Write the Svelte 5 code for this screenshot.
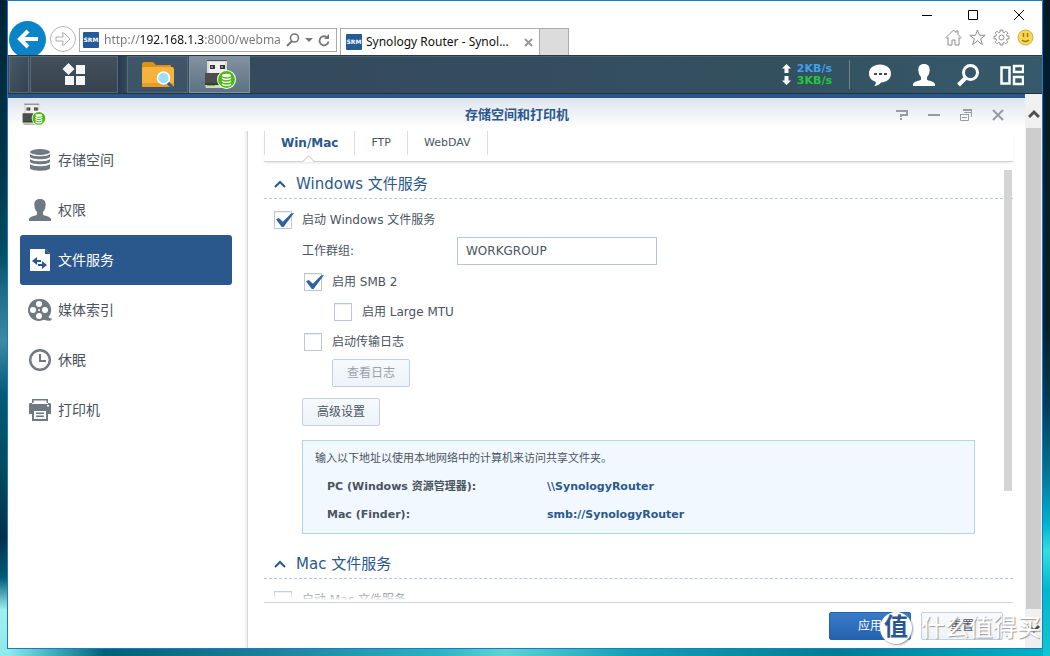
<script>
  let url = $state('http://192.168.1.3:8000/webma');
  let workgroup = $state('WORKGROUP');
  let windowsService = $state(true);
  let smb2 = $state(true);
  let largeMtu = $state(false);
  let transferLog = $state(false);
  let macService = $state(false);
  let activeTab = $state('Win/Mac');
  let activeItem = $state('files');

  const tabs = ['Win/Mac', 'FTP', 'WebDAV'];

  const items = [
    { id: 'storage', label: '存储空间' },
    { id: 'user', label: '权限' },
    { id: 'files', label: '文件服务' },
    { id: 'media', label: '媒体索引' },
    { id: 'sleep', label: '休眠' },
    { id: 'printer', label: '打印机' },
  ];
</script>

{#snippet person()}
  <path d="M12 1c-4 0-6 2.400-5.600 6.400.2 3 1 5 2.600 6.600v2.600c-.6 1.400-8 1.600-8 5v1.400h22v-1.400c0-3.400-7.400-3.600-8-5V14c1.600-1.600 2.400-3.600 2.600-6.600C18 3.400 16 1 12 1z" />
{/snippet}

{#snippet usb()}
  <svg class="usb" viewBox="0 0 34 32" aria-hidden="true">
    <path d="M4 1h20v14H4z" fill="#d9d9d9" />
    <path d="M4 1h20v1H4z" fill="#555" />
    <path d="M6 3h16v12H6z" fill="#efefef" />
    <path d="M7 6h5v4H7zM17 6h5v4h-5z" fill="#333" />
    <path d="M8 7h2v2H8zM18 7h2v2h-2z" fill="#888" />
    <path d="M2 14h24v15H4l-2-3z" fill="#3b3b3b" />
    <path d="M2 14h13v10H2z" fill="#4d4d4d" />
    <path d="M2 26h18v3H3z" fill="#d2d2d2" />
    <path d="M4 26h8v1H4z" fill="#5cc818" />
    <circle cx="23.500" cy="20.500" r="9.500" fill="#fff" />
    <circle cx="23.500" cy="20.500" r="8.500" fill="#4cba10" />
    <ellipse cx="23.500" cy="16.500" rx="4.500" ry="1.800" fill="#fff" />
    <path d="M19 19c2 2 7 2 9 0M19 22c2 2 7 2 9 0M19 25c2 2 7 2 9 0" fill="none" stroke="#fff" stroke-width="1.500" />
  </svg>
{/snippet}

<div class="desktop">
  <div class="browser">
    <header class="chrome">
      <nav class="nav">
        <button class="back" aria-label="后退">
          <svg viewBox="0 0 22 20" width="22" height="20"><path d="M21 10H3M11 2l-8 8 8 8" fill="none" stroke="#fff" stroke-width="4" /></svg>
        </button>
        <button class="forward" aria-label="前进">
          <svg viewBox="0 0 16 14" width="16" height="14"><path d="M1 5h7V3L7 1h2l6 6-6 6H7l1-2V9H1z" fill="none" stroke="#aaa" /></svg>
        </button>
      </nav>
      <div class="address">
        <span class="favicon">SRM</span>
        <input type="text" aria-label="地址" bind:value={url} />
        <button aria-label="搜索">
          <svg viewBox="0 0 14 14" width="14" height="14"><circle cx="8.500" cy="5" r="4" fill="none" stroke="#777" stroke-width="1.600" /><path d="M6 8l-5 5" stroke="#777" stroke-width="2" /></svg>
        </button>
        <button aria-label="地址列表">
          <svg viewBox="0 0 8 5" width="8" height="5"><path d="M0 0h8L4 4z" fill="#777" /></svg>
        </button>
        <button aria-label="刷新">
          <svg viewBox="0 0 12 13" width="12" height="13"><path d="M10.500 7.500a4.500 4.500 0 1 1-2-4.500" fill="none" stroke="#777" stroke-width="1.800" /><path d="M6 5h5V0z" fill="#777" /></svg>
        </button>
      </div>
      <div class="page-tab">
        <span class="favicon">SRM</span>
        <span class="page-name">Synology Router - Synol...</span>
        <button aria-label="关闭标签">
          <svg viewBox="0 0 9 9" width="9" height="9"><path d="M1 1l7 7M8 1L1 8" stroke="#999" stroke-width="2" /></svg>
        </button>
      </div>
      <button class="new-tab" aria-label="新标签"></button>
      <div class="chrome-right">
        <div class="win-controls">
          <button aria-label="最小化"><svg viewBox="0 0 12 12"><path d="M1 6.500h10" /></svg></button>
          <button aria-label="最大化"><svg viewBox="0 0 12 12"><path d="M1.500 1.500h9v9h-9z" /></svg></button>
          <button aria-label="关闭"><svg viewBox="0 0 12 12"><path d="M1 1l10 10M11 1L1 11" /></svg></button>
        </div>
        <div class="tools">
          <button aria-label="主页">
            <svg viewBox="0 0 17 17"><path d="M1 8.500L8.500 1l2.500 2.500V2h2v3.500l3 3-1 1-1-1V16h-4v-5H7v5H3V8.500l-1 1z" /></svg>
          </button>
          <button aria-label="收藏">
            <svg viewBox="0 0 17 17"><path d="M8.500 1l2 5.300h5.700l-4.600 3.500 1.800 5.700-4.900-3.500-4.900 3.500 1.800-5.700L.8 6.300h5.700z" /></svg>
          </button>
          <button aria-label="工具">
            <svg viewBox="0 0 17 17">
              <path d="M7.100 1h2.800v2l1.500.7 1.500-1.500 2 2-1.500 1.500.6 1.400h2v2.800h-2l-.6 1.400 1.500 1.500-2 2-1.500-1.500-1.500.7v2H7.100v-2l-1.500-.7-1.500 1.500-2-2 1.500-1.500L3 9.900H1V7.100h2l.6-1.400L2.100 4.200l2-2 1.500 1.500L7.100 3z" />
              <circle cx="8.500" cy="8.500" r="2.500" />
            </svg>
          </button>
          <button aria-label="反馈">
            <svg viewBox="0 0 17 17"><circle cx="8.500" cy="8.500" r="7.500" fill="#fbd84a" stroke="#c9a95a" /><path d="M6.500 4v4M10.500 4v4M5 11q3.500 3 7 0" stroke="#96702c" stroke-width="1.500" /></svg>
          </button>
        </div>
      </div>
    </header>

    <div class="taskbar">
      <div class="slot edge"></div>
      <button class="slot menu" aria-label="主菜单">
        <svg viewBox="0 0 24 24" width="24" height="24" fill="#f2f4f6"><path d="M6.500 0l6 6-6 6-6-6zM14 2h9v9h-9zM3 13h9v9H3zM14 13h9v9h-9z" /></svg>
      </button>
      <div class="gap"></div>
      <button class="slot app" aria-label="文件管理">
        <svg viewBox="0 0 34 28" width="34" height="28">
          <path d="M1 3q0-2 2-2h9l3 3h15v5H1z" fill="#d9921b" />
          <path d="M1 8q0-2 2-2h28q2 0 2 2v17q0 1-2 1H3q-2 0-2-1z" fill="#f6b23c" />
          <path d="M1 22h32v3q0 1-2 1H3q-2 0-2-1z" fill="#e69e28" />
          <path d="M26 21l6 6" stroke="#2d5f8f" stroke-width="3" />
          <circle cx="22.500" cy="17" r="6" fill="#9be0fb" stroke="#fff" stroke-width="1.500" />
        </svg>
      </button>
      <button class="slot app current" aria-label="存储空间和打印机">{@render usb()}</button>
      <div class="speed">
        <span class="up"><svg viewBox="0 0 9 9" width="9" height="9"><path d="M4.500 0L9 4.500H6.500V9h-4V4.500H0z" /></svg>2KB/s</span>
        <span class="down"><svg viewBox="0 0 9 9" width="9" height="9"><path d="M4.500 9L9 4.500H6.500V0h-4v4.500H0z" /></svg>3KB/s</span>
      </div>
      <div class="tray">
        <button aria-label="通知">
          <svg viewBox="0 0 24 24"><path d="M12 1.500c6.500 0 11 3.700 11 9s-4.500 9-10 9c-1.500 2-4 3.500-7 3.500 1.500-1 2-2.500 1.700-4C3.500 17.500 1 14.500 1 10.500c0-5.300 4.500-9 11-9z" /><path d="M6 10h3v2H6zM11 10h3v2h-3zM16 10h3v2h-3z" fill="#34505f" /></svg>
        </button>
        <button aria-label="用户"><svg viewBox="0 0 24 24">{@render person()}</svg></button>
        <button aria-label="搜索">
          <svg viewBox="0 0 24 24"><circle cx="14.500" cy="9.500" r="7" fill="none" stroke="#fff" stroke-width="3" /><path d="M9.500 15l-7 7" stroke="#fff" stroke-width="4" /></svg>
        </button>
        <button aria-label="小工具">
          <svg viewBox="0 0 24 24"><path d="M1.500 4.500h8v16h-8zM14 3h9v6h-9zM14 14h9v7h-9z" fill="none" stroke="#fff" stroke-width="2.500" /></svg>
        </button>
      </div>
    </div>

    <div class="page">
      <div class="panel">
        <div class="titlebar">
          <div class="title-icon">{@render usb()}</div>
          <h1>存储空间和打印机</h1>
          <div class="panel-controls">
            <button aria-label="帮助"><svg viewBox="0 0 12 12"><path d="M0 2h11v4H5v2M5 9v2" /></svg></button>
            <button aria-label="最小化"><svg viewBox="0 0 12 12"><path d="M0 6h12" /></svg></button>
            <button aria-label="还原"><svg viewBox="0 0 12 12"><path d="M3 1h9" /><path d="M4 3.500h7.500V8M11.500 2v3M0 5.500h9M.5 5v6.500h8V5M2 8.500h5" stroke-width="1" /></svg></button>
            <button aria-label="关闭"><svg viewBox="0 0 12 12"><path d="M1 1l10 10M11 1L1 11" /></svg></button>
          </div>
        </div>

        <div class="main">
          <nav class="sidebar">
            {#each items as item}
              <button class="item" class:active={item.id === activeItem} onclick={() => (activeItem = item.id)}>
                <svg viewBox="0 0 24 24" width="24" height="24">
                  {#if item.id === 'storage'}
                    <ellipse cx="12" cy="4" rx="10" ry="3" />
                    <path d="M2 5.500c2 3 18 3 20 0v3.500c-2 3-18 3-20 0zM2 10.500c2 3 18 3 20 0V14c-2 3-18 3-20 0zM2 15.500c2 3 18 3 20 0v5c-2 3-18 3-20 0z" />
                    <path d="M2 5.500c2 3 18 3 20 0M2 10.500c2 3 18 3 20 0M2 15.500c2 3 18 3 20 0" fill="none" stroke="#fff" />
                  {:else if item.id === 'user'}
                    {@render person()}
                  {:else if item.id === 'files'}
                    <path d="M2 1h15l5 5v17H2z" />
                    <path class="cut" d="M17 1v5h5zM4 13l5-4v3h4v2H9v3zM19 17l-5 4v-3h-4v-2h4v-3z" />
                  {:else if item.id === 'media'}
                    <path fill-rule="evenodd" d="M11 1a11 11 0 1 0 5 20.800q3 1.200 7 .7l1-2q-2.500 0-3.500-1.500A11 11 0 0 0 11 1zM11 3a3 3 0 1 1 0 6 3 3 0 0 1 0-6zM5 9a3 3 0 1 1 0 6 3 3 0 0 1 0-6zM17 9a3 3 0 1 1 0 6 3 3 0 0 1 0-6zM11 15a3 3 0 1 1 0 6 3 3 0 0 1 0-6zM11 11a1 1 0 1 1 0 2 1 1 0 0 1 0-2z" />
                  {:else if item.id === 'sleep'}
                    <circle cx="12" cy="12" r="9.800" fill="none" stroke="#6f7982" stroke-width="2.400" />
                    <path d="M12 6v7h6" fill="none" stroke="#6f7982" stroke-width="2" />
                  {:else}
                    <path fill-rule="evenodd" d="M4 1h16v5H4zM5.500 2.500v2.500h13V2.500zM1 6q0-1 2-1h18q2 0 2 1v10h-3v7H4v-7H1zM6 13v8h12v-8zM19 7v1.500h2V7z" />
                    <path d="M8 14.500h8V16H8zM8 17.500h8V19H8z" />
                  {/if}
                </svg>
                {item.label}
              </button>
            {/each}
          </nav>

          <div class="content">
            <div class="tabs" role="tablist">
              {#each tabs as tab}
                <button class="tab" role="tab" aria-selected={tab === activeTab} class:active={tab === activeTab} onclick={() => (activeTab = tab)}>
                  {tab}
                </button>
              {/each}
            </div>

            <div class="scroll">
              <section>
                <h2>
                  <svg viewBox="0 0 12 8" width="12" height="8"><path d="M1 7l5-5 5 5" /></svg>
                  Windows 文件服务
                </h2>
                <div class="fields">
                  <label class="row"><input type="checkbox" bind:checked={windowsService} />启动 Windows 文件服务</label>
                  <div class="row text-row">
                    <label for="workgroup">工作群组:</label>
                    <input id="workgroup" type="text" bind:value={workgroup} />
                  </div>
                  <label class="row level-2"><input type="checkbox" bind:checked={smb2} />启用 SMB 2</label>
                  <label class="row level-3"><input type="checkbox" bind:checked={largeMtu} />启用 Large MTU</label>
                  <label class="row level-2"><input type="checkbox" bind:checked={transferLog} />启动传输日志</label>
                  <div class="actions log"><button class="btn" disabled={!transferLog}>查看日志</button></div>
                  <div class="actions"><button class="btn">高级设置</button></div>
                  <div class="info">
                    <p>输入以下地址以使用本地网络中的计算机来访问共享文件夹。</p>
                    <dl>
                      <dt>PC (Windows 资源管理器):</dt>
                      <dd>\\SynologyRouter</dd>
                      <dt>Mac (Finder):</dt>
                      <dd>smb://SynologyRouter</dd>
                    </dl>
                  </div>
                </div>
              </section>

              <section>
                <h2>
                  <svg viewBox="0 0 12 8" width="12" height="8"><path d="M1 7l5-5 5 5" /></svg>
                  Mac 文件服务
                </h2>
                <div class="fields">
                  <label class="row"><input type="checkbox" bind:checked={macService} />启动 Mac 文件服务</label>
                </div>
              </section>
              <div class="thumb"></div>
            </div>

            <footer>
              <button class="btn primary">应用</button>
              <button class="btn">重置</button>
            </footer>
          </div>
        </div>
      </div>

      <div class="scrollbar">
        <svg viewBox="0 0 12 10" width="12" height="10"><path d="M1 8l5-5 5 5" /></svg>
        <div class="scrollbar-thumb"></div>
        <svg class="arrow-down" viewBox="0 0 12 10" width="12" height="10"><path d="M1 2l5 5 5-5" /></svg>
      </div>
    </div>
  </div>

  <div class="watermark"><span class="seal">值</span>什么值得买</div>
</div>

<style>
  :global(body) {
    margin: 0;
  }

  .desktop {
    position: relative;
    box-sizing: border-box;
    height: 100vh;
    padding: 0 7px 7px;
    overflow: hidden;
    font: 12px/18px "DejaVu Sans", "Noto Sans CJK SC", sans-serif;
    color: #4a545e;
    background:
      linear-gradient(#002436 0%, #003548 25%, #004c60 38%, #1c6a84 44%, #3c8aa4 52%, #055a74 60%, #004a5e 72%, #00304a 82%, #005a74 88%, #9ff0f0 93%, #8fe8ea 100%) left / 7px 100% no-repeat,
      linear-gradient(#001a28 0%, #00222f 50%, #003e5c 62%, #007494 72%, #00b6cf 80%, #30dfdf 84%, #00b8cc 90%, #10c8d0 100%) right / 7px 100% no-repeat,
      linear-gradient(90deg, #a0f4f4 0%, #3fb0bc 5%, #006078 10%, #1a7f98 25%, #2cb4c2 42%, #5fd4d6 48%, #12a0b4 60%, #007c94 80%, #00b4c8 100%);
  }

  button {
    display: flex;
    align-items: center;
    justify-content: center;
    margin: 0;
    padding: 0;
    border: 0;
    background: none;
    font: inherit;
    color: inherit;
  }

  .browser {
    display: flex;
    flex-direction: column;
    box-sizing: border-box;
    height: 100%;
    border: 1px solid #1979ca;
    background: #fff;
  }

  /* browser chrome */
  .chrome {
    display: flex;
    align-items: flex-end;
    height: 54px;
    flex: none;
    overflow: hidden;
    font-family: "Noto Sans", "Noto Sans CJK SC", sans-serif;
    font-size: 12px;
  }

  .nav {
    display: flex;
    align-items: center;
    gap: 4px;
    height: 32px;
    padding-left: 1px;
    margin-right: 3px;
  }

  .back {
    width: 37px;
    height: 37px;
    border-radius: 50%;
    background: #0a84c6;
  }

  .forward {
    box-sizing: border-box;
    width: 26px;
    height: 26px;
    border: 1px solid #b5b5b5;
    border-radius: 50%;
  }

  .address {
    display: flex;
    align-items: center;
    gap: 5px;
    box-sizing: border-box;
    width: 258px;
    height: 24px;
    margin: 0 3px 3px 0;
    padding: 0 6px 0 3px;
    border: 1px solid #ababab;
  }

  .address input {
    flex: 1;
    min-width: 0;
    padding: 0;
    border: 0;
    outline: 0;
    font: inherit;
    color: transparent;
    background: linear-gradient(90deg, #777 36px, #111 36px, #111 101px, #777 101px);
    background-clip: text;
  }

  .favicon {
    flex: none;
    width: 16px;
    height: 16px;
    border-radius: 1px;
    background: #245a96;
    color: #fff;
    font: bold 6px/16px "DejaVu Sans", sans-serif;
    text-align: center;
  }

  .page-tab {
    display: flex;
    align-items: center;
    gap: 4px;
    box-sizing: border-box;
    width: 200px;
    height: 27px;
    padding: 0 6px 0 5px;
    border: 1px solid #ababab;
    border-bottom: 0;
    color: #111;
  }

  .page-name {
    flex: 1;
    white-space: nowrap;
  }

  .new-tab {
    width: 29px;
    height: 27px;
    border: solid #ababab;
    border-width: 1px 1px 0 0;
    background: #dcdcdc;
  }

  .chrome-right {
    display: flex;
    flex-direction: column;
    align-items: flex-end;
    height: 54px;
    margin-left: auto;
  }

  .win-controls {
    display: flex;
    height: 28px;
  }

  .win-controls button {
    width: 46px;
  }

  .win-controls svg {
    width: 12px;
    height: 12px;
    fill: none;
    stroke: #000;
  }

  .tools {
    display: flex;
    gap: 7px;
    padding-right: 8px;
  }

  .tools svg {
    width: 17px;
    height: 17px;
    fill: none;
    stroke: #8d8d8d;
  }

  /* taskbar */
  .taskbar {
    display: flex;
    box-sizing: border-box;
    height: 39px;
    flex: none;
    padding-right: 8px;
    border-top: 1px solid #2a3946;
    border-bottom: 1px solid #24323f;
    background: linear-gradient(90deg, #35495b, #344c5e 40%, #33505f 75%, #365a6b);
    box-shadow: inset 0 1px #4b6072;
  }

  .slot {
    box-sizing: border-box;
    border: 1px solid #5b6a78;
    background: linear-gradient(#434f5b, #36424d);
  }

  .edge {
    width: 20px;
    margin: 0 1px;
    background: linear-gradient(120deg, #4a5966, #33414e);
  }

  .menu {
    width: 88px;
  }

  .gap {
    width: 9px;
    background: linear-gradient(90deg, #26384a, #36495a);
  }

  .app {
    width: 61px;
    margin-right: 1px;
    background: linear-gradient(#40566a, #3a5365);
  }

  .current {
    border-color: #8493a0;
    background: linear-gradient(#8291a0, #5b7382);
  }

  .usb {
    width: 34px;
    height: 32px;
  }

  .speed {
    display: flex;
    flex-direction: column;
    justify-content: center;
    margin-left: auto;
    padding-right: 17px;
    font-weight: bold;
    font-size: 11px;
    line-height: 12px;
  }

  .speed span {
    display: flex;
    align-items: center;
    gap: 6px;
  }

  .speed svg {
    fill: #fff;
  }

  .up {
    color: #3fa0ec;
  }

  .down {
    color: #24c83c;
  }

  .tray {
    display: flex;
    align-items: center;
    padding-left: 8px;
    border-left: 1px solid #74848f;
    margin: 4px 0;
  }

  .tray button {
    width: 44px;
  }

  .tray svg {
    width: 24px;
    height: 24px;
    fill: #fff;
  }

  /* page */
  .page {
    display: flex;
    flex: 1;
    min-height: 0;
  }

  .panel {
    display: flex;
    flex-direction: column;
    flex: 1;
    min-width: 0;
    border-top: 4px solid #2a568e;
    background: linear-gradient(#dfe5ee, #fff 30px);
  }

  .titlebar {
    display: grid;
    grid-template-columns: 1fr auto 1fr;
    align-items: center;
    height: 33px;
    padding: 0 11px 0 12px;
  }

  .title-icon {
    display: flex;
  }

  .title-icon .usb {
    width: 28px;
    height: 24px;
  }

  h1 {
    margin: 0;
    font-size: 13px;
    line-height: 18px;
    color: #2a588e;
  }

  .panel-controls {
    display: flex;
    justify-content: flex-end;
  }

  .panel-controls button {
    width: 32px;
  }

  .panel-controls svg {
    width: 12px;
    height: 12px;
    fill: none;
    stroke: #969ca4;
    stroke-width: 2;
  }

  .main {
    display: flex;
    flex: 1;
    min-height: 0;
  }

  .sidebar {
    box-sizing: border-box;
    width: 240px;
    flex: none;
    padding: 4px 15px 0 12px;
    border-right: 1px solid #d6d6d6;
    box-shadow: inset -3px 0 3px -2px #e6e6e6;
  }

  .item {
    justify-content: flex-start;
    gap: 6px;
    width: 100%;
    height: 50px;
    padding-left: 8px;
    border-radius: 3px;
    font-size: 14px;
    line-height: 20px;
  }

  .item svg {
    fill: #6f7982;
  }

  .item.active {
    background: #2a588d;
    color: #fff;
  }

  .item.active svg {
    fill: #fff;
  }

  .item.active .cut {
    fill: #2a588d;
  }

  .cut {
    fill: #fff;
  }

  .content {
    display: flex;
    flex-direction: column;
    flex: 1;
    min-width: 0;
    margin: 0 12px 0 16px;
  }

  .tabs {
    display: flex;
    height: 30px;
    flex: none;
    border-bottom: 1px solid #d0d0d0;
    box-shadow: 0 2px 3px -1px #e4e4e4;
  }

  .tab {
    position: relative;
    height: 24px;
    padding: 0 16px;
    border-right: 1px solid #d3deea;
    font-size: 11px;
  }

  .tab:first-child {
    border-left: 1px solid #d3deea;
  }

  .tab.active {
    font-weight: bold;
    font-size: 12px;
    color: #2a588e;
  }

  .tab.active::after {
    content: "";
    position: absolute;
    left: 50%;
    bottom: -11px;
    width: 8px;
    height: 8px;
    margin-left: -6px;
    border: solid #d0d0d0;
    border-width: 1px 0 0 1px;
    background: linear-gradient(135deg, #fff 50%, transparent 50%);
    transform: rotate(45deg);
  }

  .scroll {
    position: relative;
    flex: 1;
    min-height: 0;
    padding-top: 8px;
    overflow: hidden;
  }

  .scroll::after {
    content: "";
    position: absolute;
    inset: auto 0 0;
    height: 12px;
    background: linear-gradient(transparent, #fff 90%);
  }

  .thumb {
    position: absolute;
    top: 8px;
    right: 1px;
    width: 8px;
    height: 73%;
    background: #d3d4d6;
  }

  h2 {
    display: flex;
    align-items: center;
    gap: 10px;
    height: 28px;
    margin: 0;
    padding-left: 10px;
    border-bottom: 1px dashed #b8c6d6;
    font-weight: normal;
    font-size: 15px;
    color: #2a588e;
  }

  h2 svg {
    fill: none;
    stroke: #2a588e;
    stroke-width: 2;
  }

  section + section {
    margin-top: 16px;
  }

  .fields {
    padding: 6px 38px 0 10px;
  }

  .row {
    display: flex;
    align-items: center;
    gap: 10px;
    height: 30px;
  }

  .level-2 {
    padding-left: 30px;
  }

  .level-3 {
    padding-left: 60px;
  }

  input[type="checkbox"] {
    appearance: none;
    box-sizing: border-box;
    position: relative;
    width: 18px;
    height: 18px;
    margin: 0;
    border: 1px solid #bcc7d8;
    background: #fff;
    box-shadow: inset 0 1px 1px #eee;
  }

  input[type="checkbox"]:checked::after {
    content: "";
    position: absolute;
    left: 1px;
    top: 1px;
    width: 18px;
    height: 14px;
    background: #2d62a3;
    clip-path: polygon(0 45%, 16% 36%, 38% 62%, 84% 4%, 100% 0, 42% 100%, 32% 100%);
  }

  .text-row {
    height: 32px;
    padding-left: 28px;
    gap: 0;
  }

  .text-row label {
    width: 155px;
  }

  .text-row input {
    box-sizing: border-box;
    width: 200px;
    height: 28px;
    padding: 0 8px;
    border: 1px solid #b9c5d6;
    font: inherit;
    color: inherit;
  }

  .actions {
    padding-left: 28px;
  }

  .log {
    padding: 2px 0 11px 58px;
  }

  .btn {
    box-sizing: border-box;
    height: 28px;
    min-width: 78px;
    padding: 0 13px;
    border: 1px solid #c3d0e0;
    border-radius: 2px;
    background: linear-gradient(#f7fafe, #edf3f8);
  }

  .btn:disabled {
    color: #98a2ac;
  }

  .info {
    margin: 14px 0 0 28px;
    padding: 4px 12px;
    border: 1px solid #b1d6ee;
    background: #f1f8ff;
    font-size: 11px;
    line-height: 28px;
  }

  .info p {
    margin: 0;
  }

  dl {
    display: grid;
    grid-template-columns: 220px 1fr;
    margin: 0;
    padding-left: 12px;
    font-weight: bold;
  }

  dd {
    margin: 0;
    color: #2a588e;
  }

  footer {
    display: flex;
    justify-content: flex-end;
    gap: 10px;
    padding: 9px 10px 8px;
    border-top: 1px solid #d4d4d4;
    box-shadow: 0 -2px 2px -1px #eee;
  }

  footer .btn {
    width: 82px;
  }

  .primary {
    border-color: #2561a8;
    background: linear-gradient(#3a7cca, #2461ac);
    color: #fff;
  }

  .scrollbar {
    display: flex;
    flex-direction: column;
    align-items: center;
    width: 17px;
    flex: none;
    background: #f0f0f0;
  }

  .scrollbar svg {
    margin: 15px 0 9px;
    fill: none;
    stroke: #505050;
    stroke-width: 3;
  }

  .scrollbar .arrow-down {
    margin-bottom: 14px;
  }

  .scrollbar-thumb {
    flex: 1;
    width: 15px;
    background: #cdcdcd;
  }

  .watermark {
    position: absolute;
    right: 9px;
    bottom: 11px;
    display: flex;
    align-items: center;
    gap: 9px;
    font-size: 24px;
    line-height: 34px;
    color: #fff;
    text-shadow: 1px 1px 1px #999;
    pointer-events: none;
  }

  .seal {
    width: 32px;
    height: 32px;
    border-radius: 50%;
    background: #fff;
    box-shadow: 1px 1px 2px #999;
    color: #2a588e;
    font-weight: bold;
    line-height: 30px;
    text-align: center;
    text-shadow: none;
  }
</style>
